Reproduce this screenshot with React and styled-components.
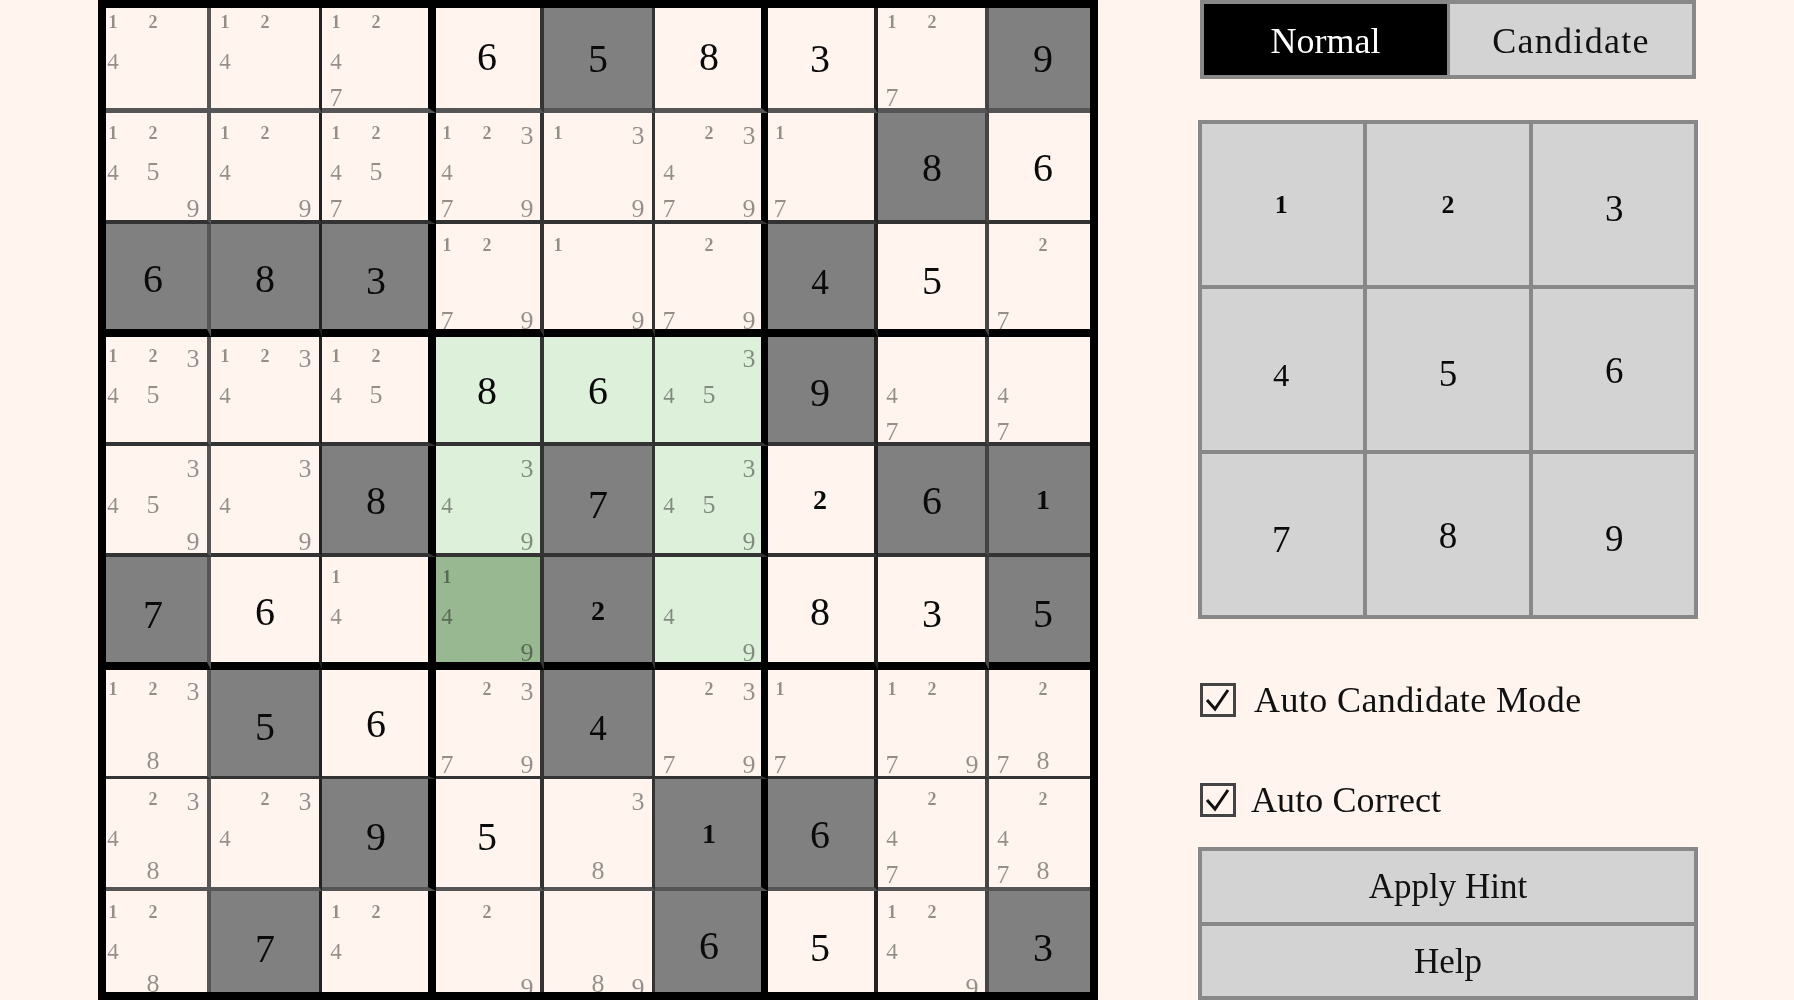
import React from "react";
import styled, { createGlobalStyle } from "styled-components";

const SERIF = `"Liberation Serif", "Times New Roman", serif`;
const PAPER = "#fff5ee";
const RULE = "#888888";
const PANEL = "#d3d3d3";

const COLS = [
  { w: 105, line: 4, color: "#555", inset: -13 },
  { w: 111, line: 3, color: "#222", inset: -6 },
  { w: 114, line: 8, color: "#000", inset: -6 },
  { w: 108, line: 4, color: "#333", inset: -9 },
  { w: 111, line: 3, color: "#333", inset: -6 },
  { w: 113, line: 7, color: "#000", inset: -6 },
  { w: 110, line: 4, color: "#222", inset: -8 },
  { w: 111, line: 4, color: "#444", inset: -6 },
  { w: 101, line: 0, color: "#000", inset: -6 },
];
const ROWS = [
  { h: 105, line: 5, color: "#555", top: -8, nudge: -1, pad: 4 },
  { h: 111, line: 4, color: "#333", top: -2, nudge: 0, pad: 0 },
  { h: 113, line: 8, color: "#000", top: -1, nudge: 0.5, pad: 0 },
  { h: 109, line: 4, color: "#333", top: -2.5, nudge: -0.5, pad: 0 },
  { h: 111, line: 4, color: "#333", top: -1.5, nudge: 0, pad: 0 },
  { h: 113, line: 8, color: "#000", top: -2, nudge: 0.5, pad: 0 },
  { h: 109, line: 3, color: "#333", top: -3, nudge: -0.5, pad: 0 },
  { h: 112, line: 4, color: "#555", top: -2, nudge: 0, pad: 0 },
  { h: 101, line: 0, color: "#000", top: -1, nudge: 2.5, pad: 0 },
];

// s: dark given, n: plain given, c: candidates; suffix g: house highlight, G: selected
const PUZZLE = [
  "c124 c124 c1247 n6 s5 n8 n3 c127 s9",
  "c12459 c1249 c12457 c123479 c139 c23479 c17 s8 n6",
  "s6 s8 s3 c1279 c19 c279 s4 n5 c27",
  "c12345 c1234 c1245 n8g n6g c345g s9 c47 c47",
  "c3459 c349 s8 c349g s7 c3459g n2 s6 s1",
  "s7 n6 c14 c149G s2 c49g n8 n3 s5",
  "c1238 s5 n6 c2379 s4 c2379 c17 c1279 c278",
  "c2348 c234 s9 n5 c38 s1 s6 c247 c2478",
  "c1248 s7 c124 c29 c89 s6 n5 c1249 s3",
].map((r) => r.split(" "));

const SIZE = { 1: 0.7, 2: 0.7, 4: 0.88 };
const DROP = { 1: 0.5, 2: 0.5, 3: 4, 4: 6, 5: 4, 6: 1.5, 7: 5, 8: 1.5, 9: 4 };
const SMALL_DROP = { 1: 0, 2: 0, 3: 3, 4: 2.5, 5: 2, 6: 0, 7: 2, 8: -2, 9: 2 };

const GlobalStyle = createGlobalStyle`
  html, body { margin: 0; padding: 0; background: ${PAPER}; height: 1000px; overflow: hidden; }
  body { font-family: ${SERIF}; color: #000; }
`;

const Page = styled.div`
  display: flex;
  align-items: flex-start;
  gap: 100px;
  width: 1794px;
  height: 1000px;
  padding-left: 98px;
  box-sizing: border-box;
  background: ${PAPER};
  filter: blur(0.55px);
`;

const Board = styled.div`
  display: grid;
  grid-template-columns: ${COLS.map((c) => `${c.w}px`).join(" ")};
  grid-template-rows: ${ROWS.map((r) => `${r.h}px`).join(" ")};
  padding: 8px;
  background: #000;
  flex: none;
`;

const CELL_BG = { s: "#808080", n: PAPER, c: PAPER, g: "#ddf0da", G: "#97b890" };

const Cell = styled.div`
  box-sizing: border-box;
  overflow: hidden;
  background-clip: padding-box;
  background-color: ${(p) => CELL_BG[p.$tone]};
  border-right: ${(p) => p.$lineX}px solid ${(p) => p.$colorX};
  border-bottom: ${(p) => p.$lineY}px solid ${(p) => p.$colorY};
`;

const CellBody = styled.div`
  width: 120px;
  height: 100%;
  margin-left: ${(p) => p.$inset}px;
  box-sizing: border-box;
  padding-bottom: ${(p) => p.$pad}px;
  display: flex;
  align-items: center;
  justify-content: center;
`;

const Digit = styled.span`
  display: block;
  font-size: ${(p) => p.$base * (SIZE[p.$d] || 1)}px;
  font-weight: ${(p) => (p.$d <= 2 ? 700 : 400)};
  line-height: 1;
  margin-top: ${(p) => ((DROP[p.$d] * p.$base) / 40 + p.$nudge) * 2}px;
  color: #0a0a0a;
`;

const CandidateGrid = styled.div`
  align-self: flex-start;
  display: grid;
  grid-template-columns: repeat(3, 40px);
  grid-template-rows: repeat(3, 37px);
  padding-top: 3px;
  margin-top: ${(p) => p.$top}px;
  width: 120px;
`;

const Slot = styled.div`
  display: flex;
  align-items: center;
  justify-content: center;
  height: 37px;
`;

const Candidate = styled.span`
  display: block;
  font-size: ${(p) => (p.$d <= 2 ? 18 : p.$d === 4 ? 23 : 26)}px;
  font-weight: ${(p) => (p.$d <= 2 ? 700 : 400)};
  line-height: 1;
  margin-top: ${(p) => SMALL_DROP[p.$d] * 2}px;
  color: rgba(0, 0, 0, 0.42);
`;

const Side = styled.div`
  width: 500px;
  flex: none;
  display: flex;
  flex-direction: column;
`;

const ModeSwitch = styled.div`
  display: grid;
  grid-template-columns: 243px 1fr;
  gap: 3px;
  margin: 0 2px;
  height: 79px;
  box-sizing: border-box;
  border: 4px solid ${RULE};
  background: ${RULE};
`;

const ModeButton = styled.div`
  display: flex;
  align-items: center;
  justify-content: center;
  padding-top: 2px;
  font-size: 36px;
  letter-spacing: ${(p) => p.$spacing}px;
  background: ${(p) => (p.$active ? "#000" : PANEL)};
  color: ${(p) => (p.$active ? "#fff" : "#111")};
`;

const NumPad = styled.div`
  display: grid;
  grid-template-columns: repeat(3, 1fr);
  grid-template-rows: repeat(3, 1fr);
  gap: 4px;
  padding: 4px;
  margin-top: 41px;
  height: 499px;
  box-sizing: border-box;
  background: ${RULE};
`;

const PadKey = styled.div`
  display: flex;
  align-items: center;
  justify-content: center;
  padding-right: ${(p) => (p.$col === 0 ? 3 : 0)}px;
  padding-left: ${(p) => (p.$col === 2 ? 2 : 0)}px;
  background: ${PANEL};
`;

const ToggleRow = styled.label`
  display: flex;
  align-items: center;
  gap: ${(p) => p.$gap}px;
  height: 34px;
  margin: ${(p) => p.$top}px 2px 0;
  font-size: 36px;
  letter-spacing: ${(p) => p.$spacing}px;
  color: #111;
`;

const CheckBox = styled.span`
  display: block;
  width: 36px;
  height: 34px;
  flex: none;
`;

const ActionGroup = styled.div`
  display: flex;
  flex-direction: column;
  gap: 4px;
  margin-top: 30px;
  border: 4px solid ${RULE};
  background: ${RULE};
  height: 153px;
  box-sizing: border-box;
`;

const ActionButton = styled.div`
  flex: 1;
  display: flex;
  align-items: center;
  justify-content: center;
  padding-top: 2px;
  font-size: 35px;
  background: ${PANEL};
  color: #111;
`;

const CheckIcon = () => (
  <CheckBox>
    <svg width="36" height="34" viewBox="0 0 36 34" fill="none">
      <rect x="1.5" y="1.5" width="33" height="31" stroke="#444" strokeWidth="3" />
      <path d="M7 17 L15 26 L28 7" stroke="#111" strokeWidth="3" />
    </svg>
  </CheckBox>
);

const BoardCell = ({ code, col, row }) => {
  const kind = code[0];
  const mark = /[gG]$/.test(code) ? code[code.length - 1] : null;
  const value = code.slice(1).replace(/[gG]$/, "");
  const c = COLS[col];
  const r = ROWS[row];
  return (
    <Cell
      $tone={mark || kind}
      $lineX={c.line}
      $colorX={c.color}
      $lineY={r.line}
      $colorY={r.color}
    >
      <CellBody $inset={c.inset} $pad={kind === "c" ? 0 : r.pad}>
        {kind === "c" ? (
          <CandidateGrid $top={r.top}>
            {[1, 2, 3, 4, 5, 6, 7, 8, 9].map((d) => (
              <Slot key={d}>
                {value.includes(String(d)) && <Candidate $d={d}>{d}</Candidate>}
              </Slot>
            ))}
          </CandidateGrid>
        ) : (
          <Digit $d={Number(value)} $base={40} $nudge={r.nudge}>
            {value}
          </Digit>
        )}
      </CellBody>
    </Cell>
  );
};

export default function App() {
  return (
    <>
      <GlobalStyle />
      <Page>
        <Board>
          {PUZZLE.map((line, row) =>
            line.map((code, col) => (
              <BoardCell key={`${row}-${col}`} code={code} col={col} row={row} />
            ))
          )}
        </Board>
        <Side>
          <ModeSwitch>
            <ModeButton $active $spacing={0}>Normal</ModeButton>
            <ModeButton $spacing={1.3}>Candidate</ModeButton>
          </ModeSwitch>
          <NumPad>
            {[1, 2, 3, 4, 5, 6, 7, 8, 9].map((d) => (
              <PadKey key={d} $col={(d - 1) % 3}>
                <Digit $d={d} $base={37} $nudge={d <= 2 ? -0.5 : 0}>{d}</Digit>
              </PadKey>
            ))}
          </NumPad>
          <ToggleRow $top={64} $gap={18} $spacing={0.4}>
            <CheckIcon />
            Auto Candidate Mode
          </ToggleRow>
          <ToggleRow $top={66} $gap={15} $spacing={0.1}>
            <CheckIcon />
            Auto Correct
          </ToggleRow>
          <ActionGroup>
            <ActionButton>Apply Hint</ActionButton>
            <ActionButton>Help</ActionButton>
          </ActionGroup>
        </Side>
      </Page>
    </>
  );
}
